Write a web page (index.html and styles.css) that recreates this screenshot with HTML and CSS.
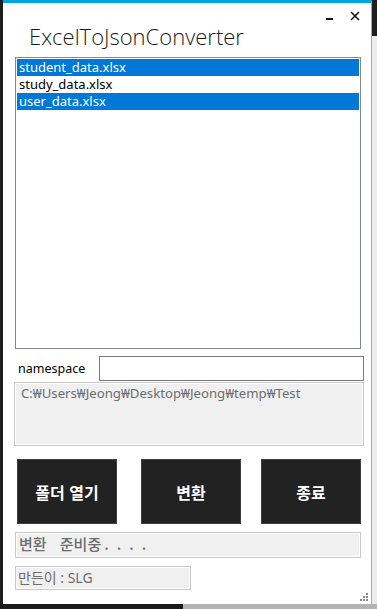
FILE: index.html
```html
<!DOCTYPE html>
<html lang="ko">
<head>
    <meta charset="UTF-8">
    <title>ExcelToJsonConverter</title>
    <link rel="stylesheet" href="styles.css">
</head>
<body>
<div class="desktop">
    <div class="desk-row">
        <div class="edge-left"></div>
        <div class="window">
            <div class="titlebar">
                <div class="controls">
                    <span class="btn-min"></span>
                    <svg class="btn-close" width="10" height="10" viewBox="0 0 10 10">
                        <path d="M1 1 L9 9 M9 1 L1 9" stroke="#111" stroke-width="1.6" fill="none"/>
                    </svg>
                </div>
                <h1 class="title">ExcelToJsonConverter</h1>
            </div>

            <!-- 파일 목록 -->
            <ul class="file-list">
                <li class="selected">student_data.xlsx</li>
                <li>study_data.xlsx</li>
                <li class="selected">user_data.xlsx</li>
            </ul>

            <div class="ns-row">
                <label class="ns-label">namespace</label>
                <input class="ns-input" type="text">
            </div>

            <div class="path-box">C:₩Users₩Jeong₩Desktop₩Jeong₩temp₩Test</div>

            <div class="buttons">
                <button class="action">폴더 열기</button>
                <button class="action">변환</button>
                <button class="action">종료</button>
            </div>

            <div class="status">변환 준비중<span class="dots">....</span></div>

            <div class="footer">
                <div class="credit">만든이 : SLG</div>
                <svg class="grip" width="10" height="10" viewBox="0 0 10 10">
                    <rect x="7" y="1" width="2" height="2" fill="#8a8a8a"/>
                    <rect x="4" y="4" width="2" height="2" fill="#8a8a8a"/>
                    <rect x="7" y="4" width="2" height="2" fill="#8a8a8a"/>
                    <rect x="1" y="7" width="2" height="2" fill="#8a8a8a"/>
                    <rect x="4" y="7" width="2" height="2" fill="#8a8a8a"/>
                    <rect x="7" y="7" width="2" height="2" fill="#8a8a8a"/>
                </svg>
            </div>
        </div>
        <div class="edge-right"></div>
    </div>
    <div class="edge-bottom">
        <div class="bottom-dark"></div>
        <div class="bottom-gray"></div>
    </div>
</div>
</body>
</html>
```

FILE: styles.css
```css
body {
    margin: 0;
    padding: 0;
    background: #1e1e1e;
    overflow: hidden;
    font-family: "Noto Sans", "Noto Sans CJK KR", sans-serif;
}

.desktop {
    width: 377px;
    height: 609px;
    display: flex;
    flex-direction: column;
}

.desk-row {
    display: flex;
    height: 604px;
}

.edge-left {
    width: 3px;
    background: #1e1e1e;
}

.edge-right {
    flex: 1;
    background: linear-gradient(#1e1e1e 0, #1e1e1e 36px, #ececec 36px);
}

.edge-bottom {
    display: flex;
    flex: 1;
}

.bottom-dark {
    width: 183px;
    background: #1a1a1a;
}

.bottom-gray {
    flex: 1;
    background: #b4b4b4;
}

/* 창 본체 */
.window {
    width: 369px;
    box-sizing: border-box;
    background: #fff;
    border-top: 3px solid #00a3da;
    border-right: 1px solid #a9a9a9;
    display: flex;
    flex-direction: column;
}

.titlebar {
    height: 54px;
    display: flex;
    flex-direction: column;
}

.controls {
    display: flex;
    justify-content: flex-end;
    align-items: center;
    gap: 17px;
    height: 18px;
    padding: 4px 11px 0 0;
}

.btn-min {
    width: 7px;
    height: 2px;
    margin-top: 6px;
    background: #111;
}

.title {
    margin: -4px 0 0 26px;
    font-family: "Open Sans", sans-serif;
    font-weight: 300;
    font-size: 22px;
    line-height: 30px;
    color: #1a1a1a;
}

.file-list {
    list-style: none;
    margin: 0 0 0 12px;
    padding: 1px;
    width: 346px;
    height: 292px;
    box-sizing: border-box;
    border: 1px solid #828790;
    font-size: 13px;
}

.file-list li {
    height: 17px;
    line-height: 17px;
    padding-left: 2px;
    color: #000;
}

.file-list li.selected {
    background: #0078d7;
    color: #fff;
}

.ns-row {
    display: flex;
    align-items: center;
    margin-top: 7px;
    height: 25px;
}

.ns-label {
    width: 81px;
    padding-left: 15px;
    font-size: 12.5px;
    color: #000;
}

.ns-input {
    width: 265px;
    height: 25px;
    box-sizing: border-box;
    margin: 0;
    border: 1px solid #7a7a7a;
    padding: 0 4px;
}

.path-box {
    margin: 1px 0 0 11px;
    width: 350px;
    height: 64px;
    box-sizing: border-box;
    background: #f0f0f0;
    border: 1px solid #c8c8c8;
    box-shadow: inset 0 0 0 1px #fff;
    padding: 1px 6px;
    font-size: 13.2px;
    color: #6d6d6d;
}

.buttons {
    display: flex;
    justify-content: space-between;
    margin: 13px 0 0 14px;
    width: 344px;
}

.action {
    width: 100px;
    height: 65px;
    box-sizing: border-box;
    margin: 0;
    background: #222;
    border: 1px solid #3f3f3f;
    color: #fff;
    font-family: "Noto Sans CJK KR", sans-serif;
    font-weight: 700;
    font-size: 16px;
}

.action:nth-child(2) {
    margin-left: 4px;
}

.status {
    margin: 8px 0 0 12px;
    width: 346px;
    height: 26px;
    box-sizing: border-box;
    background: #f0f0f0;
    border: 1px solid #c8c8c8;
    box-shadow: inset 0 0 0 1px #fff;
    padding-left: 3px;
    font-family: "Noto Sans CJK KR", sans-serif;
    font-size: 15px;
    font-weight: 500;
    line-height: 22px;
    word-spacing: 9px;
    color: #6d6d6d;
}

.status .dots {
    margin-left: 3px;
    letter-spacing: 8px;
}

.footer {
    display: flex;
    justify-content: space-between;
    align-items: flex-end;
    margin-top: 8px;
    padding: 0 2px 2px 12px;
    flex: 1;
}

.credit {
    align-self: flex-start;
    width: 176px;
    height: 24px;
    box-sizing: border-box;
    background: #f0f0f0;
    border: 1px solid #c8c8c8;
    box-shadow: inset 0 0 0 1px #fff;
    padding-left: 2px;
    font-size: 14px;
    line-height: 22px;
    color: #6d6d6d;
}
```
